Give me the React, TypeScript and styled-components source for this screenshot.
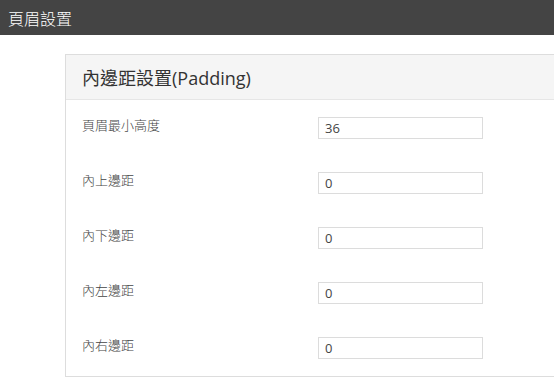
import React, { useState } from "react";
import styled, { createGlobalStyle } from "styled-components";

const GlobalStyle = createGlobalStyle`
  html, body {
    margin: 0;
    padding: 0;
    background: #ffffff;
    overflow: hidden;
  }
  body {
    font-family: "Open Sans", "Noto Sans CJK TC", sans-serif;
  }
`;

const TopBar = styled.header`
  height: 35px;
  background-color: #444444;
  display: flex;
  align-items: center;
  padding-left: 8px;
`;

const TopTitle = styled.h1`
  margin: 0;
  font-weight: 300;
  font-size: 16px;
  color: #ffffff;
  font-family: "Noto Sans CJK TC", sans-serif;
`;

const Content = styled.main`
  padding: 19px 0 0 65px;
`;

/* the panel runs on past the right edge, so no right border shows */
const Panel = styled.section`
  border: 1px solid #dddddd;
  border-right: none;
  background: #ffffff;
`;

const PanelHeader = styled.div`
  height: 44px;
  background-color: #f5f5f5;
  border-bottom: 1px solid #e6e6e6;
  display: flex;
  align-items: center;
  padding-left: 16px;
`;

const PanelTitle = styled.h2`
  margin: 0;
  font-weight: 400;
  font-size: 18px;
  color: #333333;
`;

const PanelBody = styled.div`
  padding: 17px 0 17px 16px;
  display: grid;
  gap: 33px;
`;

const Row = styled.div`
  display: grid;
  grid-template-columns: 236px 165px;
  align-items: start;
`;

const Label = styled.label`
  font-size: 13px;
  line-height: 16px;
  font-weight: 300;
  color: #444444;
  font-family: "Noto Sans CJK TC", sans-serif;
`;

const Input = styled.input`
  box-sizing: border-box;
  width: 165px;
  height: 22px;
  border: 1px solid #dcdcdc;
  padding: 0 6px;
  font-family: "Open Sans", sans-serif;
  font-size: 13px;
  color: #444444;
  outline: none;
  background: #ffffff;
`;

const fields = [
  { label: "頁眉最小高度", value: "36" },
  { label: "內上邊距", value: "0" },
  { label: "內下邊距", value: "0" },
  { label: "內左邊距", value: "0" },
  { label: "內右邊距", value: "0" },
];

const Field = ({ label, initial }: { label: string; initial: string }) => {
  const [value, setValue] = useState(initial);
  return (
    <Row>
      <Label>{label}</Label>
      <Input value={value} onChange={(e) => setValue(e.target.value)} />
    </Row>
  );
};

const App = () => {
  return (
    <>
      <GlobalStyle />
      <TopBar>
        <TopTitle>頁眉設置</TopTitle>
      </TopBar>
      <Content>
        <Panel>
          <PanelHeader>
            <PanelTitle>內邊距設置(Padding)</PanelTitle>
          </PanelHeader>
          <PanelBody>
            {fields.map((f) => (
              <Field key={f.label} label={f.label} initial={f.value} />
            ))}
          </PanelBody>
        </Panel>
      </Content>
    </>
  );
};

export default App;
